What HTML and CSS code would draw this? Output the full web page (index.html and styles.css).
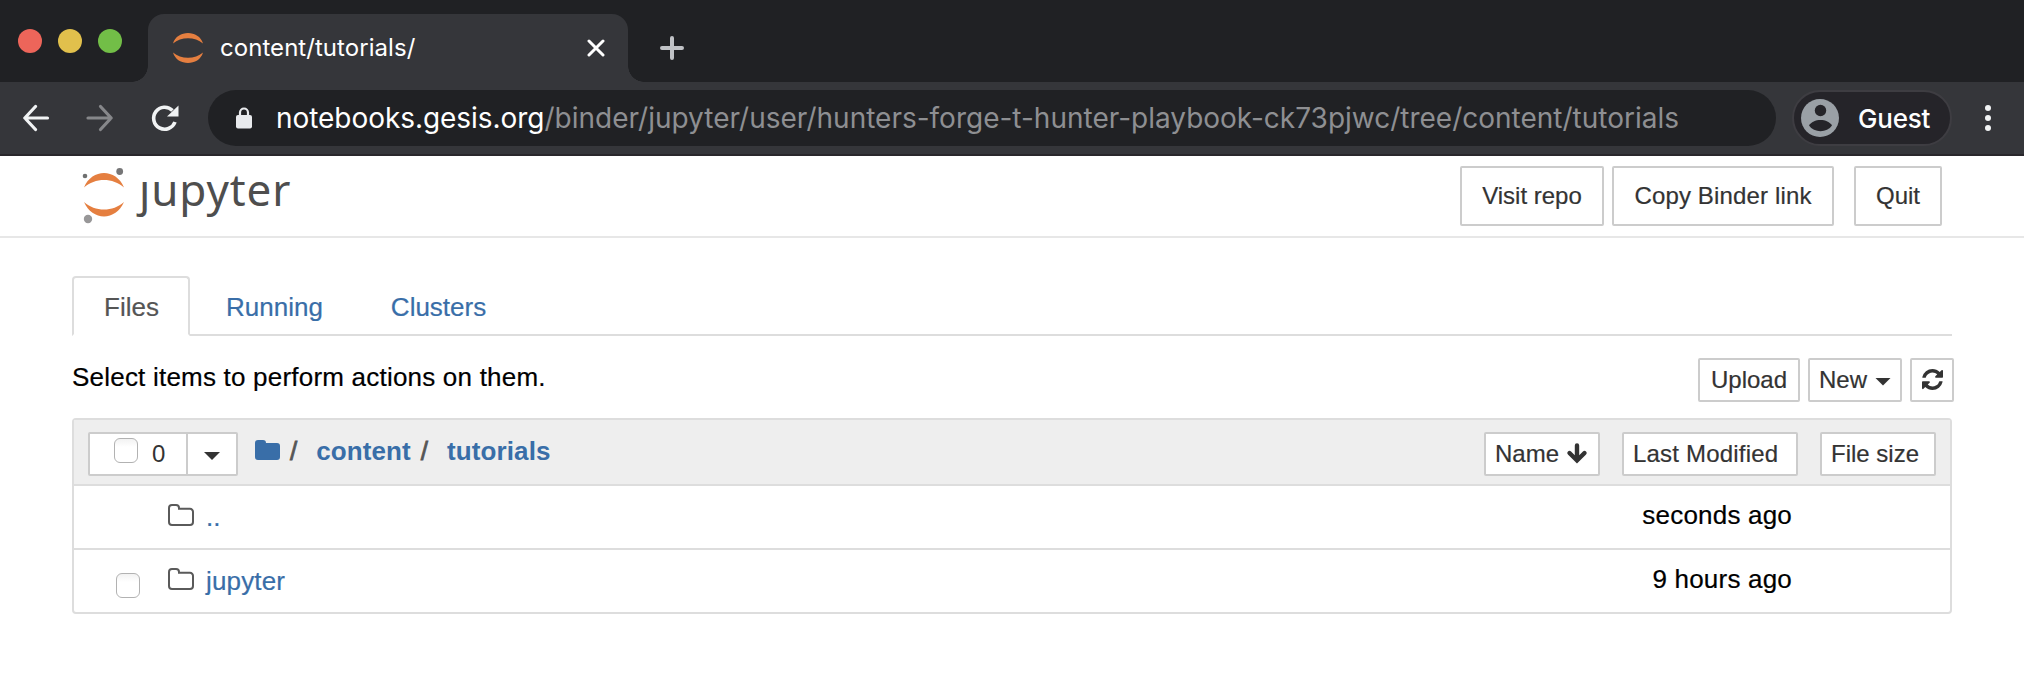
FILE: index.html
```html
<!DOCTYPE html>
<html lang="en">
<head>
<meta charset="utf-8">
<title>content/tutorials/</title>
<link rel="stylesheet" href="styles.css">
</head>
<body>
<div class="tabstrip">
  <div class="lights"><i class="red"></i><i class="yellow"></i><i class="green"></i></div>
  <div class="tab">
    <svg class="favicon" width="30" height="30" viewBox="0 0 30 30" fill="#e57f40"><path d="M0 10.500C4-3.500 26-3.500 30 10.500C22 3.500 8 3.500 0 10.500ZM0 19.500C4 33.500 26 33.500 30 19.500C22 26.500 8 26.500 0 19.500Z"/></svg>
    <span class="tab-title">content/tutorials/</span>
    <svg class="close" width="18" height="18" viewBox="0 0 18 18" stroke="#fff" stroke-width="3" stroke-linecap="round"><path d="M2 2L16 16M16 2L2 16"/></svg>
  </div>
  <svg class="plus" width="24" height="24" viewBox="0 0 24 24" stroke="#c0c2c6" stroke-width="4" stroke-linecap="round"><path d="M12 2V22M2 12H22"/></svg>
</div>
<div class="toolbar">
  <svg class="nav" width="160" height="32" viewBox="0 0 160 32" fill="none" stroke-width="3.200" stroke-linecap="round" stroke-linejoin="round"><path stroke="#f1f3f4" d="M24.500 16H2M12.500 4.500L1.800 16L12.500 27.500"/><path stroke="#86878a" d="M65 16H88M77.500 4.500L88.200 16L77.500 27.500"/><path stroke="#f1f3f4" stroke-linecap="butt" stroke-width="3.600" d="M149.500 8.500A11 11 0 1 0 152 20"/><path fill="#f1f3f4" d="M155.500 3.500V14.500H144Z"/></svg>
  <div class="omnibox">
    <svg width="16" height="22" viewBox="0 0 16 22"><rect y="8" width="16" height="13.500" rx="2" fill="#e8eaed"/><path d="M4 9V5.500A4 4 0 0 1 12 5.500V9" fill="none" stroke="#e8eaed" stroke-width="2.200"/></svg>
    <span class="url"><span class="host">notebooks.gesis.org</span><span class="path">/binder/jupyter/user/hunters-forge-t-hunter-playbook-ck73pjwc/tree/content/tutorials</span></span>
  </div>
  <div class="guest">
    <svg width="38" height="38" viewBox="0 0 38 38"><circle cx="19" cy="19" r="19" fill="#9aa0a6"/><circle cx="19.500" cy="11.500" r="5.700" fill="#252429"/><path d="M8 26.500C12 19 27 19 31 26.500C26 34 13 34 8 26.500Z" fill="#252429"/></svg>
    <span>Guest</span>
  </div>
  <svg class="dots" width="6" height="28" viewBox="0 0 6 28" fill="#f1f3f4"><circle cx="3" cy="4" r="3"/><circle cx="3" cy="14" r="3"/><circle cx="3" cy="24" r="3"/></svg>
</div>
<header class="header">
  <div class="logo">
    <svg width="46" height="60" viewBox="0 0 46 60"><path fill="#e57f40" d="M3 22.500C11 3.300 35 3.300 43 22.500C32 12.500 14 12.500 3 22.500ZM3 37C11 56.200 35 56.200 43 37C32 47 14 47 3 37Z"/><circle cx="4" cy="11" r="2.300" fill="#6f7070"/><circle cx="38.700" cy="6.500" r="3.400" fill="#767677"/><circle cx="7" cy="54" r="4.200" fill="#989798"/></svg>
    <span class="wordmark">ȷupyter</span>
  </div>
  <div class="actions">
    <button class="btn visit">Visit repo</button><button class="btn copy">Copy Binder link</button><button class="btn quit">Quit</button>
  </div>
</header>
<main>
  <nav class="tabs"><a class="active">Files</a><a>Running</a><a>Clusters</a></nav>
  <div class="tools">
    <span class="hint">Select items to perform actions on them.</span>
    <div class="tool-buttons">
      <button class="btn xs upload">Upload</button>
      <button class="btn xs new">New<i class="caret"></i></button>
      <button class="btn xs refresh"><svg width="21" height="21" viewBox="0 0 1536 1536" fill="#333"><path d="M1511 928q0 5-1 7-64 268-268 434.500T764 1536q-146 0-282.500-55T238 1324l-129 129q-19 19-45 19t-45-19-19-45V960q0-26 19-45t45-19h448q26 0 45 19t19 45-19 45l-137 137q71 66 161 102t187 36q134 0 250-65t186-179q11-17 53-117 8-23 30-23h192q13 0 22.500 9.500t9.500 22.500zM1536 128v448q0 26-19 45t-45 19h-448q-26 0-45-19t-19-45 19-45l138-138Q969 256 768 256q-134 0-250 65T332 500q-11 17-53 117-8 23-30 23H50q-13 0-22.500-9.500T18 608v-7q65-268 270-434.500T768 0q146 0 284 55.500T1297 212l130-129q19-19 45-19t45 19 19 45z"/></svg></button>
    </div>
  </div>
  <section class="list">
    <div class="list-header">
      <div class="selector"><div class="all"><i class="check"></i><span>0</span></div><div class="drop"><i class="caret"></i></div></div>
      <div class="crumbs">
        <svg width="25" height="20" viewBox="0 0 25 20"><path fill="#396ea8" d="M0 3a3 3 0 0 1 3-3h5a3 3 0 0 1 3 3h11a3 3 0 0 1 3 3v11a3 3 0 0 1-3 3H3a3 3 0 0 1-3-3Z"/></svg><span class="sep">/</span><a class="c1">content</a><span class="sep">/</span><a class="c2">tutorials</a>
      </div>
      <div class="sorts">
        <button class="btn xs sort">Name<svg width="22" height="22" viewBox="0 0 22 22"><path d="M11 2.500V17M3.500 10L11 17.500L18.500 10" fill="none" stroke="#333" stroke-width="4.400" stroke-linecap="round" stroke-linejoin="miter"/></svg></button>
        <button class="btn xs modified">Last Modified</button>
        <button class="btn xs size">File size</button>
      </div>
    </div>
    <div class="row">
      <span class="slot"></span>
      <svg class="folder" width="26" height="22" viewBox="0 0 26 22"><path d="M1 4a3 3 0 0 1 3-3h4a3 3 0 0 1 3 3v.800h11a3 3 0 0 1 3 3V18a3 3 0 0 1-3 3H4a3 3 0 0 1-3-3Z" fill="none" stroke="#5a5a5a" stroke-width="2"/></svg>
      <a>..</a><span class="date">seconds ago</span>
    </div>
    <div class="row">
      <span class="slot"><i class="check"></i></span>
      <svg class="folder" width="26" height="22" viewBox="0 0 26 22"><path d="M1 4a3 3 0 0 1 3-3h4a3 3 0 0 1 3 3v.800h11a3 3 0 0 1 3 3V18a3 3 0 0 1-3 3H4a3 3 0 0 1-3-3Z" fill="none" stroke="#5a5a5a" stroke-width="2"/></svg>
      <a>jupyter</a><span class="date">9 hours ago</span>
    </div>
  </section>
</main>
</body>
</html>
```
FILE: styles.css
```css
* { box-sizing: border-box; }
body { margin: 0; width: 2024px; height: 688px; overflow: hidden; background: #fff; color: #000; font: 26px/36px "Liberation Sans", Arial, sans-serif; }
svg { display: block; flex: none; }
span, a, button { white-space: nowrap; }
.tabstrip { height: 82px; background: #202124; display: flex; font-family: Inter, sans-serif; }
.lights { display: flex; gap: 16px; padding: 29px 0 0 18px; width: 148px; }
.lights i { width: 24px; height: 24px; border-radius: 50%; }
.red { background: #ed655a; }
.yellow { background: #e1c04c; }
.green { background: #72be47; }
.tab { position: relative; width: 480px; height: 68px; margin-top: 14px; padding: 0 23px 0 25px; background: #35363a; border-radius: 16px 16px 0 0; display: flex; align-items: center; color: #fff; }
.tab::before, .tab::after { content: ""; position: absolute; bottom: 0; width: 16px; height: 16px; }
.tab::before { left: -16px; background: radial-gradient(circle at 0 0, #202124 15.500px, #35363a 16px); }
.tab::after { right: -16px; background: radial-gradient(circle at 100% 0, #202124 15.500px, #35363a 16px); }
.tab-title { margin-left: 17px; font-size: 24px; letter-spacing: 0.05px; }
.close { margin-left: auto; }
.plus { margin: 36px 0 0 32px; }
.toolbar { height: 74px; padding-top: 8px; background: #35363a; border-bottom: 2px solid #29272b; display: flex; font-family: Inter, sans-serif; }
.nav { margin: 12px 0 0 23px; }
.omnibox { width: 1568px; height: 56px; margin-left: 25px; padding-left: 28px; border-radius: 28px; background: #202124; display: flex; align-items: center; }
.url { margin-left: 24px; font-size: 28px; }
.host { color: #fff; letter-spacing: -0.05px; }
.path { color: #8e8f92; }
.guest { width: 160px; height: 56px; margin-left: 16px; padding-left: 7px; border: 2px solid #3e3d42; border-radius: 28px; background: #252429; color: #fff; display: flex; align-items: center; gap: 19px; font-size: 26px; font-weight: 500; letter-spacing: -0.2px; }
.guest span { padding-top: 2px; }
.dots { margin: 14px 0 0 33px; }
.header { height: 82px; border-bottom: 2px solid #e7e7e7; display: flex; justify-content: space-between; padding: 10px 82px 0 81px; }
.logo { display: flex; }
.logo svg { margin-top: -1px; }
.wordmark { margin: -7px 0 0 12px; font: 44px/60px "Noto Sans", sans-serif; letter-spacing: 0.9px; color: #4e4e4e; }
.actions { display: flex; }
.btn { height: 60px; padding: 0; border: 2px solid #ccc; border-radius: 2px; background: #fff; color: #333; font: 24px/34px "Liberation Sans", Arial, sans-serif; -webkit-text-stroke: 0.2px currentColor; }
.visit { width: 144px; }
.copy { width: 222px; margin-left: 8px; letter-spacing: 0.15px; }
.quit { width: 88px; margin-left: 20px; }
main { padding: 38px 72px 0; }
.tabs { height: 60px; border-bottom: 2px solid #ddd; display: flex; gap: 4px; }
.tabs a { height: 60px; padding: 11px 30px 0; border: 2px solid transparent; border-radius: 4px 4px 0 0; color: #396ea8; -webkit-text-stroke: 0.2px currentColor; }
.tabs a.active { width: 118px; color: #555; background: #fff; border-color: #ddd #ddd #fff; }
.tools { height: 82px; display: flex; justify-content: space-between; padding-top: 22px; }
.hint { padding-top: 1px; letter-spacing: 0.21px; -webkit-text-stroke: 0.2px currentColor; }
.tool-buttons { display: flex; gap: 8px; margin-right: -2px; }
.btn.xs { height: 44px; display: flex; align-items: center; padding-bottom: 1px; }
.upload { width: 102px; justify-content: center; }
.btn.new { width: 94px; padding-left: 9px; }
.refresh { width: 44px; justify-content: center; }
.caret { display: block; width: 16px; height: 8px; background: #333; clip-path: polygon(0 0, 100% 0, 50% 100%); }
.new .caret { margin-left: 8px; margin-top: 4px; }
.list { border: 2px solid #ddd; border-radius: 4px; }
.list-header { height: 64px; padding: 12px 14px 0; background: #eee; display: flex; }
.selector { width: 150px; height: 44px; background: #fff; border: 2px solid #ccc; border-radius: 2px; display: flex; }
.all { width: 98px; padding-left: 24px; border-right: 2px solid #ccc; display: flex; font-size: 24px; color: #333; }
.all .check { margin-top: 4px; }
.all span { margin: 1px 0 0 14px; line-height: 38px; }
.drop { padding: 18px 0 0 16px; }
.check { width: 24px; height: 25px; border: 1.500px solid #b2b2b2; border-radius: 6px; background: linear-gradient(#f2f2f2, #fff 35%); }
.crumbs { display: flex; margin-left: 17px; padding-top: 1px; height: 36px; font-weight: bold; color: #555; }
.crumbs svg { margin-top: 7px; }
.crumbs a, .row a { color: #396ea8; }
.crumbs a { letter-spacing: 0.1px; }
.sep { margin-left: 10px; font-weight: normal; -webkit-text-stroke: 0.8px #555; }
.c1 { margin-left: 19px; }
.c2 { margin-left: 19px; }
.sorts { display: flex; gap: 22px; margin-left: auto; }
.btn.sort { width: 116px; padding-left: 9px; }
.sort svg { margin: 1px 0 0 7px; }
.btn.modified { width: 176px; padding-left: 9px; letter-spacing: 0.2px; }
.btn.size { width: 116px; padding-left: 9px; }
.row { height: 64px; border-top: 2px solid #ddd; display: flex; }
.slot { width: 94px; padding: 23px 0 0 42px; }
.slot .check { display: block; }
.folder { margin: 18px 12px 0 0; }
.row a { margin-top: 13px; letter-spacing: 0.15px; -webkit-text-stroke: 0.2px currentColor; }
.date { margin: 11px 158px 0 auto; letter-spacing: 0.2px; -webkit-text-stroke: 0.2px currentColor; }
```
